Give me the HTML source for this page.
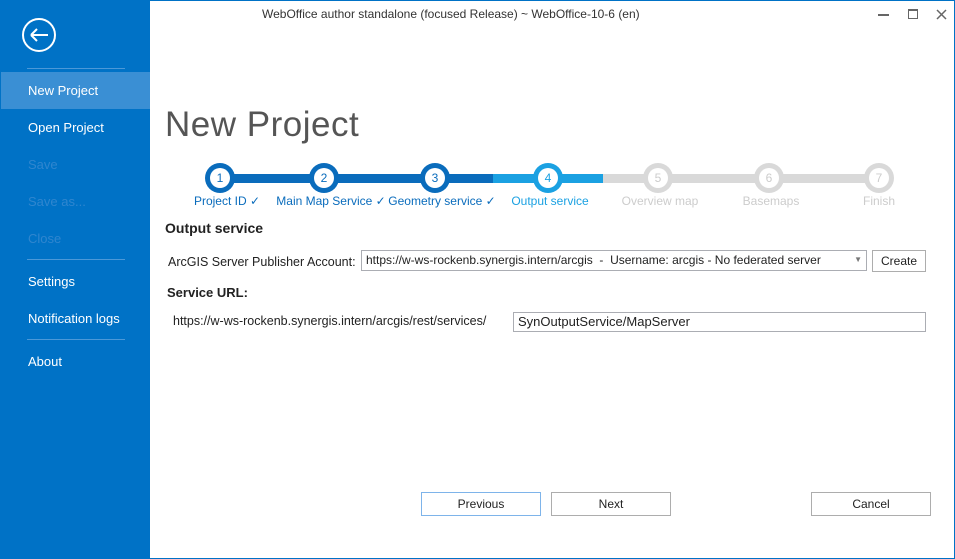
<!DOCTYPE html>
<html><head><style>
*{margin:0;padding:0;box-sizing:border-box}
body{width:955px;height:559px;overflow:hidden;background:#fff;font-family:"Segoe UI","Liberation Sans",sans-serif;position:relative;color:#222}
.side{position:absolute;left:0;top:0;width:150px;height:559px;background:#0072c6}
.side .t{position:absolute;left:28px;font-size:13px;color:#fff;white-space:nowrap}
.side .dis{color:#2f86cf}
.sep{position:absolute;left:27px;width:98px;height:1px;background:#4b98d8}
.hl{position:absolute;left:1px;top:72px;width:149px;height:37px;background:#3a8fd4}
.frame{position:absolute;left:150px;top:0;width:805px;height:559px;border:1px solid #0072c6;border-left:none}
.abs{position:absolute;white-space:nowrap}
.lbl{position:absolute;top:194px;font-size:12px;color:#0a6cbc;transform:translateX(-50%);white-space:nowrap}
.g{color:#ccc}
.circ{position:absolute;top:163px;width:30px;height:30px;border-radius:50%;transform:translateX(-50%);display:flex;align-items:center;justify-content:center}
.circ span{width:20px;height:20px;border-radius:50%;background:#fff;font-size:12px;display:flex;align-items:center;justify-content:center}
.btn{position:absolute;top:492px;height:24px;width:120px;border:1px solid #adadad;font-size:12px;text-align:center;line-height:22px;color:#222}
</style></head><body>
<div class="side">
<svg style="position:absolute;left:21px;top:17px" width="36" height="36" viewBox="0 0 36 36"><circle cx="18" cy="18" r="16" fill="none" stroke="#fff" stroke-width="2"/><path d="M10 18H27M10 18L16 12M10 18L16 24" fill="none" stroke="#fff" stroke-width="2"/></svg>
<div class="sep" style="top:68px"></div>
<div class="hl"></div>
<div class="t" style="top:83px">New Project</div>
<div class="t" style="top:120px">Open Project</div>
<div class="t dis" style="top:157px">Save</div>
<div class="t dis" style="top:194px">Save as...</div>
<div class="t dis" style="top:231px">Close</div>
<div class="sep" style="top:259px"></div>
<div class="t" style="top:274px">Settings</div>
<div class="t" style="top:311px">Notification logs</div>
<div class="sep" style="top:339px"></div>
<div class="t" style="top:354px">About</div>
</div>
<div class="frame"></div>
<div class="abs" style="left:262px;top:7px;font-size:12px;color:#333">WebOffice author standalone (focused Release) ~ WebOffice-10-6 (en)</div>
<div class="abs" style="left:878px;top:14px;width:11px;height:2px;background:#666"></div>
<div class="abs" style="left:908px;top:9px;width:10px;height:10px;border:1px solid #666;border-top-width:2px"></div>
<svg class="abs" style="left:936px;top:9px" width="11" height="11" viewBox="0 0 11 11"><path d="M1 1L10 10M10 1L1 10" stroke="#666" stroke-width="1.5"/></svg>
<div class="abs" style="left:165px;top:105px;font-size:35px;color:#555;letter-spacing:0.5px">New Project</div>
<div class="abs" style="left:220px;top:174px;width:273px;height:9px;background:#0a6cbc"></div>
<div class="abs" style="left:493px;top:174px;width:110px;height:9px;background:#1ba1e2"></div>
<div class="abs" style="left:603px;top:174px;width:276px;height:9px;background:#d9d9d9"></div>
<div class="circ" style="left:220px;background:#0a6cbc"><span style="color:#0a6cbc">1</span></div>
<div class="circ" style="left:324px;background:#0a6cbc"><span style="color:#0a6cbc">2</span></div>
<div class="circ" style="left:435px;background:#0a6cbc"><span style="color:#0a6cbc">3</span></div>
<div class="circ" style="left:548px;background:#1ba1e2"><span style="color:#1ba1e2">4</span></div>
<div class="circ" style="left:658px;background:#d9d9d9"><span style="color:#ccc">5</span></div>
<div class="circ" style="left:769px;background:#d9d9d9"><span style="color:#ccc">6</span></div>
<div class="circ" style="left:879px;background:#d9d9d9"><span style="color:#ccc">7</span></div>
<div class="lbl" style="left:227px">Project ID ✓</div>
<div class="lbl" style="left:331px">Main Map Service ✓</div>
<div class="lbl" style="left:442px">Geometry service ✓</div>
<div class="lbl" style="left:550px;color:#1ba1e2">Output service</div>
<div class="lbl g" style="left:660px">Overview map</div>
<div class="lbl g" style="left:771px">Basemaps</div>
<div class="lbl g" style="left:879px">Finish</div>
<div class="abs" style="left:165px;top:220px;font-size:14px;font-weight:bold">Output service</div>
<div class="abs" style="left:168px;top:255px;font-size:12.5px">ArcGIS Server Publisher Account:</div>
<div class="abs" style="left:361px;top:250px;width:506px;height:21px;border:1px solid #abadb3;font-size:12px;padding:2px 4px">https://w-ws-rockenb.synergis.intern/arcgis&nbsp; - &nbsp;Username: arcgis - No federated server<span style="position:absolute;right:4px;top:4px;font-size:8px;color:#777">▼</span></div>
<div class="abs" style="left:872px;top:250px;width:54px;height:22px;border:1px solid #adadad;font-size:12px;text-align:center;line-height:20px">Create</div>
<div class="abs" style="left:167px;top:285px;font-size:13px;font-weight:bold">Service URL:</div>
<div class="abs" style="left:173px;top:314px;font-size:12.5px">https://w-ws-rockenb.synergis.intern/arcgis/rest/services/</div>
<div class="abs" style="left:513px;top:312px;width:413px;height:20px;border:1px solid #abadb3;font-size:13px;padding:0 4px;line-height:18px">SynOutputService/MapServer</div>
<div class="btn" style="left:421px;border-color:#7eb4ea">Previous</div>
<div class="btn" style="left:551px">Next</div>
<div class="btn" style="left:811px">Cancel</div>
</body></html>
